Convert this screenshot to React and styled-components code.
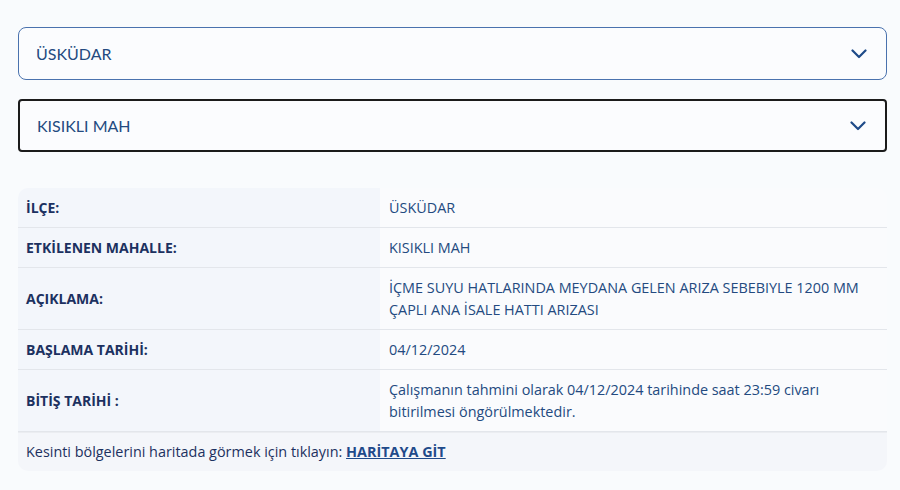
import styled, { createGlobalStyle } from 'styled-components';

const GlobalStyle = createGlobalStyle`
    body {
        margin: 0;
        background: #f9fbfd;
        font-family: "Open Sans", "Noto Sans", sans-serif;
        color: #1d3663;
    }
`;

const Page = styled.div`
    padding: 27px 13px 18px 18px;
    display: flex;
    flex-direction: column;
`;

const Select = styled.div`
    height: 53px;
    box-sizing: border-box;
    display: flex;
    align-items: center;
    justify-content: space-between;
    padding: 0 19px 0 17px;
    background: #fbfcfe;
    border: ${(p) => (p.$active ? '2px solid #1b1b1b' : '1px solid #4a72ae')};
    border-radius: ${(p) => (p.$active ? '4px' : '8px')};
    margin-bottom: ${(p) => (p.$active ? '36px' : '19px')};
    font-family: Lato, "Open Sans", sans-serif;
    font-size: 16px;
    color: #234a80;
`;

const Chevron = () => (
    <svg width="16" height="10" viewBox="0 0 16 10" fill="none">
        <path d="M1.5 1.5 L8 8 L14.5 1.5" stroke="#1e4a88" strokeWidth="2.2" strokeLinecap="round" strokeLinejoin="round" />
    </svg>
);

const Table = styled.div`
    display: grid;
    grid-template-columns: 362px 1fr;
    border-radius: 10px;
    overflow: hidden;
    font-size: 14.4px;
    line-height: 22px;
`;

const Label = styled.div`
    background: #f3f6fb;
    padding: 9px 8px 8px;
    display: flex;
    align-items: center;
    font-size: 14px;
    font-weight: 700;
    color: #1c3160;
    border-bottom: 1px solid #e3e6eb;
`;

const Value = styled.div`
    background: #fafbfd;
    padding: 9px 9px 8px;
    display: flex;
    align-items: center;
    color: #234a80;
    border-bottom: 1px solid #e3e6eb;
`;

const Footer = styled.div`
    grid-column: 1 / -1;
    background: #f4f6fa;
    border-top: 1px solid #ebedf1;
    padding: 8px 8px;
    color: #1c3160;
`;

const MapLink = styled.a`
    font-weight: 700;
    color: #1f4a8a;
    text-decoration: underline;
`;

const rows = [
    ['İLÇE:', 'ÜSKÜDAR'],
    ['ETKİLENEN MAHALLE:', 'KISIKLI MAH'],
    ['AÇIKLAMA:', 'İÇME SUYU HATLARINDA MEYDANA GELEN ARIZA SEBEBIYLE 1200 MM ÇAPLI ANA İSALE HATTI ARIZASI'],
    ['BAŞLAMA TARİHİ:', '04/12/2024'],
    ['BİTİŞ TARİHİ :', 'Çalışmanın tahmini olarak 04/12/2024 tarihinde saat 23:59 civarı bitirilmesi öngörülmektedir.'],
];

const App = () => {
    return (
        <>
            <GlobalStyle />
            <Page>
                <Select>
                    ÜSKÜDAR
                    <Chevron />
                </Select>
                <Select $active>
                    KISIKLI MAH
                    <Chevron />
                </Select>
                <Table>
                    {rows.map(([label, value]) => (
                        <>
                            <Label key={label}>{label}</Label>
                            <Value key={label + 'v'}>{value}</Value>
                        </>
                    ))}
                    <Footer>
                        Kesinti bölgelerini haritada görmek için tıklayın: <MapLink href="#">HARİTAYA GİT</MapLink>
                    </Footer>
                </Table>
            </Page>
        </>
    );
};

export default App;
